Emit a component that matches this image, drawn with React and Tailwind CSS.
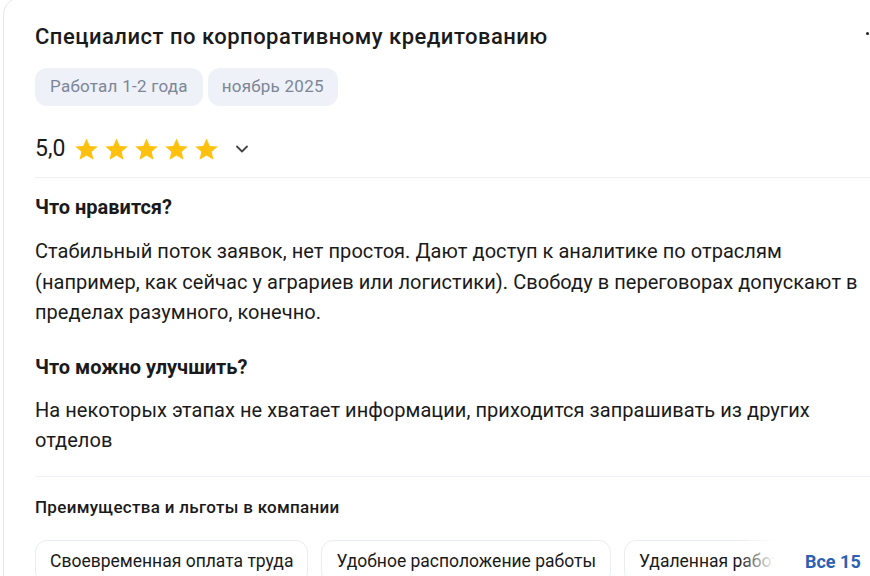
import React from "react";
import { ChevronDown } from "lucide-react";

const Star = () => (
  <svg width="27" height="27" viewBox="0 0 24 24" className="shrink-0">
    <path
      d="M12 2.2l2.9 6.6 7.1.6-5.4 4.7 1.6 7-6.2-3.7-6.2 3.7 1.6-7L2 9.4l7.1-.6z"
      fill="#ffc10e"
    />
  </svg>
);

const benefits = [
  "Своевременная оплата труда",
  "Удобное расположение работы",
  "Удаленная работа",
];

export default function App() {
  return (
    <div className="w-[870px] h-[576px] overflow-hidden bg-white font-['Roboto',sans-serif] text-[#1a1a1a]">
      <div className="ml-[3px] mt-[-3px] w-[930px] rounded-tl-[18px] border border-[#e4e7ee] pl-[31px] pr-[44px] pt-[25px] pb-6">
        {/* Header */}
        <div className="flex items-center justify-between h-7">
          <h1 className="text-[22px] leading-7 font-medium tracking-[0.5px]">
            Специалист по корпоративному кредитованию
          </h1>
          <div className="flex items-center gap-[5px] mr-[3px] mb-[7px]">
            <span className="w-[3px] h-[3px] rounded-full bg-[#222]" />
            <span className="w-[3px] h-[3px] rounded-full bg-[#222]" />
            <span className="w-[3px] h-[3px] rounded-full bg-[#222]" />
          </div>
        </div>

        <div className="flex gap-[5px] mt-[17px]">
          <span className="h-[38px] px-[15px] flex items-center rounded-xl bg-[#eef1f7] text-[#7d8698] text-[17px] tracking-[0.25px]">
            Работал 1-2 года
          </span>
          <span className="h-[38px] px-[14px] flex items-center rounded-xl bg-[#eef1f7] text-[#7d8698] text-[17px] tracking-[0.25px]">
            ноябрь 2025
          </span>
        </div>

        {/* Rating */}
        <div className="flex items-center h-8 mt-[27px]">
          <span className="text-[23px] leading-8 mr-[8px]">5,0</span>
          <div className="flex gap-[3px]">
            <Star />
            <Star />
            <Star />
            <Star />
            <Star />
          </div>
          <ChevronDown className="ml-[12px] text-[#444]" size={20} strokeWidth={2.2} />
        </div>

        <div className="h-px bg-[#eef0f4] mt-[12px]" />

        {/* Review */}
        <h2 className="text-[20px] leading-6 font-bold mt-[17px]">Что нравится?</h2>
        <p className="text-[20px] leading-[30.5px] tracking-[0.05px] mt-[17px] max-w-[835px]">
          Стабильный поток заявок, нет простоя. Дают доступ к аналитике по отраслям
          (например, как сейчас у аграриев или логистики). Свободу в переговорах
          допускают в пределах разумного, конечно.
        </p>

        <h2 className="text-[20px] leading-6 font-bold mt-[27px]">Что можно улучшить?</h2>
        <p className="text-[20px] leading-[30px] tracking-[0.05px] mt-[16px] max-w-[835px]">
          На некоторых этапах не хватает информации, приходится запрашивать из других
          отделов
        </p>

        <div className="h-px bg-[#eef0f4] mt-[21px]" />

        {/* Benefits */}
        <h3 className="text-[17px] leading-[22px] font-medium tracking-[0.3px] mt-[19px]">
          Преимущества и льготы в компании
        </h3>
        <div className="flex items-center mt-[22px] w-[835px]">
          <div className="relative w-[740px] overflow-hidden">
            <div className="flex gap-[13px]">
              {benefits.map((b) => (
                <span
                  key={b}
                  className="shrink-0 h-[44px] px-[14px] flex items-center rounded-xl border border-[#e9ecf2] text-[17.5px] whitespace-nowrap"
                >
                  {b}
                </span>
              ))}
            </div>
            <div className="absolute right-0 top-0 h-full w-[36px] bg-gradient-to-r from-white/0 to-white" />
          </div>
          <button className="ml-[30px] text-[18px] font-bold text-[#2d5fb2] whitespace-nowrap">
            Все 15
          </button>
        </div>
      </div>
    </div>
  );
}
